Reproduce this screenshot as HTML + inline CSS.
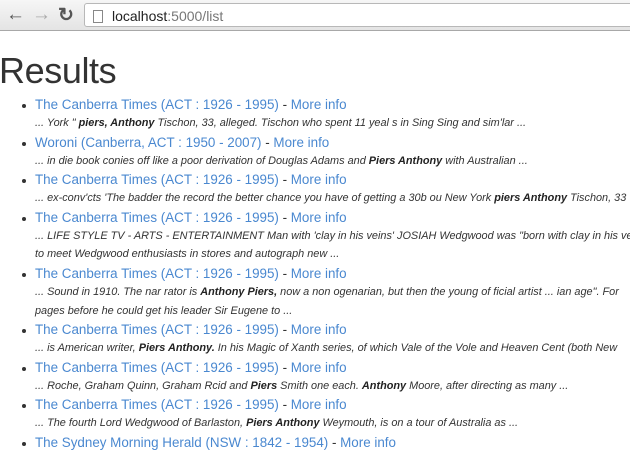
<!DOCTYPE html>
<html><head><meta charset="utf-8"><style>
*{margin:0;padding:0;box-sizing:border-box}
body{width:630px;height:445px;overflow:hidden;background:#fff;font-family:"Liberation Sans",Arial,sans-serif;color:#333;position:relative}
.bar{position:absolute;left:0;top:0;width:630px;height:31px;background:linear-gradient(#f6f6f6,#e4e4e4);border-bottom:1px solid #a8a8a8}
.addr{position:absolute;left:84px;top:3px;width:560px;height:24px;background:#fff;border:1px solid #b8b8b8;border-radius:3px}
.addr span{position:absolute;left:27px;top:4px;font-size:14px;color:#222}
.addr span i{font-style:normal;color:#777}
.doc{position:absolute;left:8px;top:6px;width:10px;height:13px;border:1px solid #888;background:#fff}
.nav{position:absolute;top:4px;font-size:19px;font-weight:bold}
h1{position:absolute;left:-1px;top:50px;font-size:36px;font-weight:normal;color:#333;letter-spacing:-0.4px}
ul{position:absolute;left:35px;top:95px;list-style:none}
li{position:relative}
li:before{content:"";position:absolute;left:-13px;top:9px;width:4px;height:4px;border-radius:50%;background:#333}
.t{font-size:13.4px;line-height:19px;color:#333;white-space:nowrap}
.t a{color:#4a88d0;text-decoration:none}
.s{font-size:10.9px;font-style:italic;line-height:18.6px;white-space:nowrap;color:#333}
.s b{color:#222}
</style></head><body>
<div class="bar">
<span class="nav" style="left:6px;color:#555">&#8592;</span>
<span class="nav" style="left:32px;color:#aaa">&#8594;</span>
<span class="nav" style="left:58px;color:#555">&#8635;</span>
<div class="addr"><div class="doc"></div><span>localhost<i>:5000/list</i></span></div>
</div>
<h1>Results</h1>
<ul>
<li><div class="t"><a>The Canberra Times (ACT : 1926 - 1995)</a> - <a>More info</a></div><div class="s">... York " <b>piers, Anthony</b> Tischon, 33, alleged. Tischon who spent 11 yeal s in Sing Sing and sim'lar ...</div></li>
<li><div class="t"><a>Woroni (Canberra, ACT : 1950 - 2007)</a> - <a>More info</a></div><div class="s">... in die book conies off like a poor derivation of Douglas Adams and <b>Piers Anthony</b> with Australian ...</div></li>
<li><div class="t"><a>The Canberra Times (ACT : 1926 - 1995)</a> - <a>More info</a></div><div class="s">... ex-conv'cts 'The badder the record the better chance you have of getting a 30b ou New York <b>piers Anthony</b> Tischon, 33</div></li>
<li><div class="t"><a>The Canberra Times (ACT : 1926 - 1995)</a> - <a>More info</a></div><div class="s">... LIFE STYLE TV - ARTS - ENTERTAINMENT Man with 'clay in his veins' JOSIAH Wedgwood was "born with clay in his veins"<br>to meet Wedgwood enthusiasts in stores and autograph new ...</div></li>
<li><div class="t"><a>The Canberra Times (ACT : 1926 - 1995)</a> - <a>More info</a></div><div class="s">... Sound in 1910. The nar rator is <b>Anthony Piers,</b> now a non ogenarian, but then the young of ficial artist ... ian age". For<br>pages before he could get his leader Sir Eugene to ...</div></li>
<li><div class="t"><a>The Canberra Times (ACT : 1926 - 1995)</a> - <a>More info</a></div><div class="s">... is American writer, <b>Piers Anthony.</b> In his Magic of Xanth series, of which Vale of the Vole and Heaven Cent (both New</div></li>
<li><div class="t"><a>The Canberra Times (ACT : 1926 - 1995)</a> - <a>More info</a></div><div class="s">... Roche, Graham Quinn, Graham Rcid and <b>Piers</b> Smith one each. <b>Anthony</b> Moore, after directing as many ...</div></li>
<li><div class="t"><a>The Canberra Times (ACT : 1926 - 1995)</a> - <a>More info</a></div><div class="s">... The fourth Lord Wedgwood of Barlaston, <b>Piers Anthony</b> Weymouth, is on a tour of Australia as ...</div></li>
<li><div class="t"><a>The Sydney Morning Herald (NSW : 1842 - 1954)</a> - <a>More info</a></div></li>
</ul>
</body></html>
